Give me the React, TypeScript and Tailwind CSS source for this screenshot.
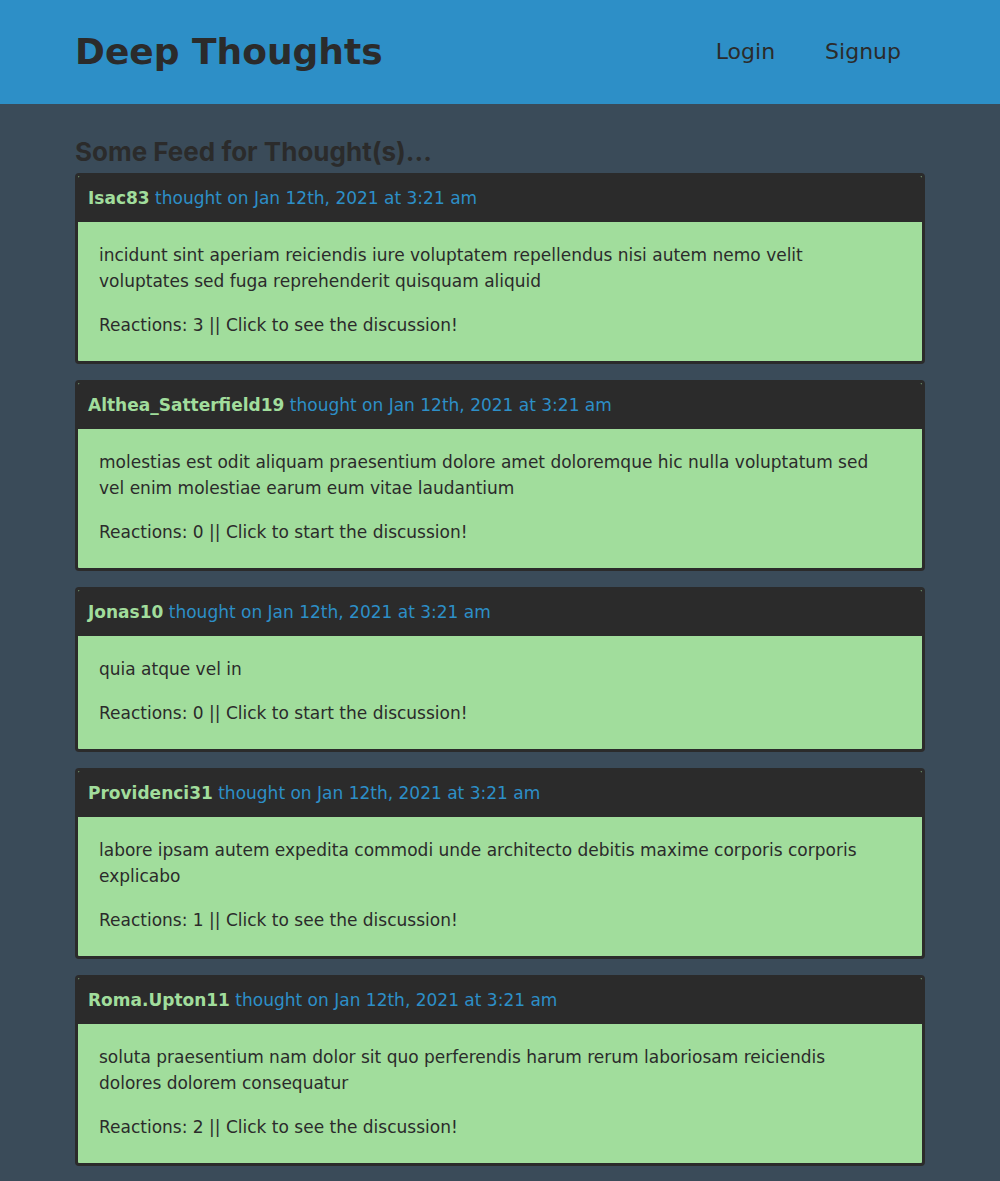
type Thought = {
  username: string;
  createdAt: string;
  text: string;
  reactions: number;
};

const createdAt = 'Jan 12th, 2021 at 3:21 am';

const thoughts: Thought[] = [
  {
    username: 'Isac83',
    createdAt,
    text: 'incidunt sint aperiam reiciendis iure voluptatem repellendus nisi autem nemo velit voluptates sed fuga reprehenderit quisquam aliquid',
    reactions: 3,
  },
  {
    username: 'Althea_Satterfield19',
    createdAt,
    text: 'molestias est odit aliquam praesentium dolore amet doloremque hic nulla voluptatum sed vel enim molestiae earum eum vitae laudantium',
    reactions: 0,
  },
  { username: 'Jonas10', createdAt, text: 'quia atque vel in', reactions: 0 },
  {
    username: 'Providenci31',
    createdAt,
    text: 'labore ipsam autem expedita commodi unde architecto debitis maxime corporis corporis explicabo',
    reactions: 1,
  },
  {
    username: 'Roma.Upton11',
    createdAt,
    text: 'soluta praesentium nam dolor sit quo perferendis harum rerum laboriosam reiciendis dolores dolorem consequatur',
    reactions: 2,
  },
];

function Header() {
  return (
    <header className="bg-[#2d8fc7] py-6">
      <div className="mx-auto flex w-[85%] items-center justify-between">
        <h1 className="text-4xl leading-14 font-bold">
          <a href="#home">Deep Thoughts</a>
        </h1>
        <nav className="flex gap-[50px] pr-6 text-[22px] leading-8">
          <a href="#login">Login</a>
          <a href="#signup">Signup</a>
        </nav>
      </div>
    </header>
  );
}

function ThoughtCard({ thought }: { thought: Thought }) {
  return (
    <article className="rounded-[4px] border-3 border-[#2b2b2b] bg-[#a1dd9c]">
      <p className="rounded-t-[2px] bg-[#2b2b2b] px-[10px] pt-[9px] pb-[11px] leading-[26px] text-[#2d8fc7]">
        <a href="#profile" className="font-bold text-[#a1dd9c]">
          {thought.username}
        </a>{' '}
        thought on {thought.createdAt}
      </p>
      <a href="#thought" className="flex flex-col gap-[18px] pt-5 pr-10 pb-[23px] pl-[21px] leading-[26px]">
        <p>{thought.text}</p>
        <p>
          Reactions: {thought.reactions} || Click to {thought.reactions ? 'see' : 'start'} the discussion!
        </p>
      </a>
    </article>
  );
}

export default function App() {
  return (
    <div className="min-h-screen bg-[#3a4b59] font-['DejaVu_Sans',sans-serif] text-[17px] text-[#2b2b2b]">
      <Header />
      <main className="mx-auto w-[85%] pt-8 pb-3">
        <h2 className="pb-[5px] font-['Inter',sans-serif] text-[26px] leading-8 font-bold">
          Some Feed for Thought(s)...
        </h2>
        <div className="flex flex-col gap-4">
          {thoughts.map((thought) => (
            <ThoughtCard key={thought.username} thought={thought} />
          ))}
        </div>
      </main>
    </div>
  );
}
